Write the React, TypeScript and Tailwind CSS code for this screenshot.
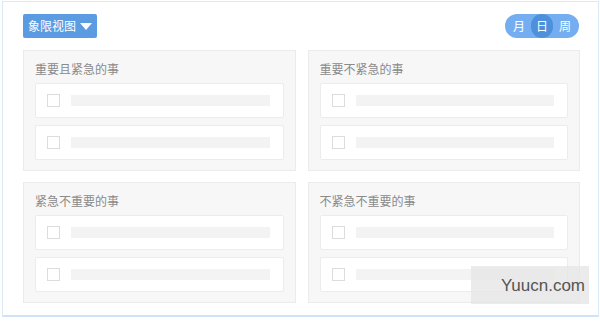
import { ChevronDown } from 'lucide-react'

const quadrants = ['重要且紧急的事', '重要不紧急的事', '紧急不重要的事', '不紧急不重要的事']

function TaskRow() {
  return (
    <div className="flex h-[35px] items-center rounded-[2px] border border-[#ececec] bg-white pl-[11px] pr-[13px]">
      <span className="h-[13px] w-[13px] shrink-0 border border-[#dcdcdc] bg-white" />
      <span className="ml-[11px] h-[11px] flex-1 bg-[#f3f3f3]" />
    </div>
  )
}

function Quadrant({ title }: { title: string }) {
  return (
    <div className="flex h-[121px] flex-col border border-[#ebebeb] bg-[#f7f7f8] px-[11px] pb-[9px]">
      <div className="flex h-[32px] items-center pt-[4px] text-[12px] text-[#8a8a8a]">{title}</div>
      <div className="flex flex-col gap-[7px]">
        <TaskRow />
        <TaskRow />
      </div>
    </div>
  )
}

export default function App() {
  return (
    <div
      className="relative h-[321px] w-[600px] bg-white pl-[2px] pt-[1px]"
      style={{ fontFamily: '"Noto Sans CJK SC", "Noto Sans", sans-serif' }}
    >
      <div className="h-[316px] w-[597px] border border-b-2 border-[#d9eaf9] border-b-[#cfe2f6] pl-[20px] pr-[18px] pt-[12px]">
        <div className="flex h-[24px] items-center justify-between">
          <button
            type="button"
            className="flex h-[24px] w-[74px] items-center justify-center gap-[4px] rounded-[2px] bg-[#5a9be2] text-[12px] text-white"
          >
            象限视图
            <span className="h-0 w-0 border-x-[6px] border-t-[7px] border-x-transparent border-t-white" />
          </button>
          <div className="mr-[1px] flex h-[24px] w-[74px] items-center rounded-full bg-[#74aef0] text-[12px] text-white">
            <span className="flex h-[24px] w-[26px] items-center justify-center pl-[2px]">月</span>
            <span className="flex h-[24px] w-[22px] items-center justify-center rounded-full bg-[#4d90dc]">日</span>
            <span className="flex h-[24px] w-[26px] items-center justify-center pr-[2px]">周</span>
          </div>
        </div>
        <div className="mt-[12px] grid grid-cols-2 gap-x-[12px] gap-y-[11px]">
          {quadrants.map((q) => (
            <Quadrant key={q} title={q} />
          ))}
        </div>
      </div>

      {/* 水印 */}
      <div className="absolute left-[471px] top-[266px] flex h-[38px] w-[118px] items-center justify-end bg-[#e6e6e6]/80 pr-[4px]">
        <span className="text-[17px] leading-none text-[#555]" style={{ fontFamily: '"Liberation Sans", Arial, sans-serif' }}>
          Yuucn.com
        </span>
      </div>
    </div>
  )
}
